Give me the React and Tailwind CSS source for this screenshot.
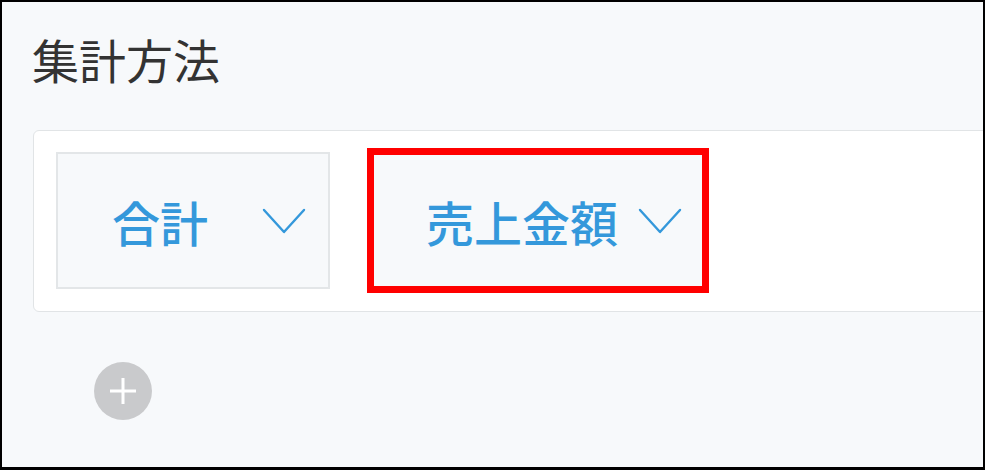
const Chevron = () => (
  <svg width="44" height="28" viewBox="0 0 44 28" className="shrink-0">
    <polyline
      points="2,3 22,25 42,3"
      fill="none"
      stroke="#3498db"
      strokeWidth="2.4"
      strokeLinecap="round"
      strokeLinejoin="round"
    />
  </svg>
)

const SelectBox = ({ label, highlighted }) => (
  <div className="relative">
    <div className="flex h-[137px] items-center border-2 border-[#e3e6e8] bg-[#f7f9fb] pl-[54px] pr-[22px]">
      <span className="mr-[20px] min-w-[130px] text-[48px] leading-none font-medium text-[#3498db]">
        {label}
      </span>
      <Chevron />
    </div>
    {highlighted && (
      <div className="pointer-events-none absolute -inset-x-[3px] -inset-y-[4px] border-[7px] border-[#ff0000]" />
    )}
  </div>
)

export default function App() {
  return (
    <div
      className="h-[470px] w-[985px] overflow-hidden border-t-2 border-l-2 border-r-2 border-b-[3px] border-black bg-[#f7f9fb]"
      style={{ fontFamily: '"Noto Sans CJK JP", "Noto Sans", sans-serif' }}
    >
      <div className="pl-[31px] pt-[31px]">
        <h2 className="-ml-[1px] text-[47px] leading-[52px] font-normal text-[#333333]">集計方法</h2>

        <div className="mt-[45px] -mr-[20px] flex gap-[40px] rounded-[6px] border border-[#e1e4e6] bg-white px-[22px] pt-[21px] pb-[22px]">
          <SelectBox label="合計" />
          <SelectBox label="売上金額" highlighted />
        </div>

        <button className="mt-[50px] ml-[61px] flex h-[58px] w-[58px] items-center justify-center rounded-full bg-[#c9cacc]">
          <svg width="28" height="28" viewBox="0 0 28 28">
            <path d="M14 1v26M1 14h26" stroke="#ffffff" strokeWidth="3" />
          </svg>
        </button>
      </div>
    </div>
  )
}
